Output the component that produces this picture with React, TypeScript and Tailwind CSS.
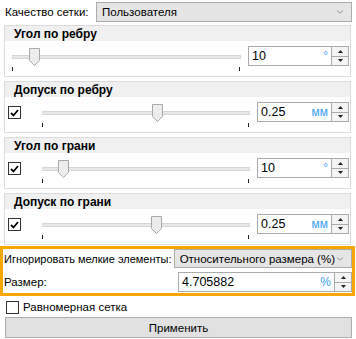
import { ChevronDown } from "lucide-react";

type Group = {
  title: string;
  checkbox: boolean;
  thumb: number;
  value: string;
  unit: string;
};

const groups: Group[] = [
  { title: "Угол по ребру", checkbox: false, thumb: 17, value: "10", unit: "°" },
  { title: "Допуск по ребру", checkbox: true, thumb: 110, value: "0.25", unit: "мм" },
  { title: "Угол по грани", checkbox: true, thumb: 16, value: "10", unit: "°" },
  { title: "Допуск по грани", checkbox: true, thumb: 109, value: "0.25", unit: "мм" },
];

function Check({ checked }: { checked: boolean }) {
  return (
    <div className="w-[13px] h-[13px] border border-[#333] bg-white flex items-center justify-center shrink-0">
      {checked && (
        <svg width="9" height="8" viewBox="0 0 9 8">
          <path d="M1 4 L3.5 6.5 L8 1" fill="none" stroke="#000" strokeWidth="1.8" />
        </svg>
      )}
    </div>
  );
}

function SpinBox({ value, unit, width }: { value: string; unit: string; width: string }) {
  return (
    <div className={`${width} h-[20px] border border-[#ababab] bg-white flex`}>
      <div className="flex-1 flex items-center pl-[3px] pr-[3px] text-[12.5px] text-black">
        <span className="flex-1">{value}</span>
        <span className="text-[#3c9ef0] text-[12px]">{unit}</span>
      </div>
      <div className="w-[17px] border-l border-[#ababab] flex flex-col">
        <div className="flex-1 bg-[#f4f4f4] border-b border-[#ababab] flex items-center justify-center">
          <svg width="5" height="3" viewBox="0 0 5 3"><path d="M0 3 L2.5 0 L5 3 Z" fill="#222" /></svg>
        </div>
        <div className="flex-1 bg-[#f4f4f4] flex items-center justify-center">
          <svg width="5" height="3" viewBox="0 0 5 3"><path d="M0 0 L2.5 3 L5 0 Z" fill="#222" /></svg>
        </div>
      </div>
    </div>
  );
}

function Slider({ thumb, width }: { thumb: number; width: string }) {
  return (
    <div className={`relative ${width} h-[26px]`}>
      <div className="absolute left-0 right-0 top-[5px] h-[4px] bg-[#e7e7e7] border border-[#d6d6d6]" />
      <svg className="absolute top-[-2px]" style={{ left: thumb }} width="11" height="18" viewBox="0 0 11 18">
        <path d="M0.5 0.5 H10.5 V12.5 L5.5 17.5 L0.5 12.5 Z" fill="#ececec" stroke="#a8a8a8" />
      </svg>
      <div className="absolute left-0 top-[17px] w-[1px] h-[4px] bg-[#222]" />
      <div className="absolute right-[1px] top-[17px] w-[1px] h-[4px] bg-[#222]" />
    </div>
  );
}

export default function App() {
  return (
    <div className="w-[356px] h-[339px] bg-white text-[11.5px] leading-[14px] text-black overflow-hidden whitespace-nowrap" style={{ fontFamily: '"Liberation Sans", Arial, sans-serif' }}>
      <div className="flex items-center pt-[2px] pr-[4px]">
        <span className="w-[96px] pl-[5px]">Качество сетки:</span>
        <div className="flex-1 h-[20px] border border-[#acacac] bg-[#e5e5e5] flex items-center pl-[5px] pr-[6px]">
          <span className="flex-1">Пользователя</span>
          <ChevronDown size={10} color="#777" />
        </div>
      </div>

      <div className="mt-[3px] pl-[4px] pr-[5px] flex flex-col gap-[4px]">
        {groups.map((g) => (
          <div key={g.title} className="border border-[#dcdcdc] h-[52px] flex flex-col">
            <div className="h-[19px] bg-[#f0f0f0] pl-[9px] flex items-center font-bold text-[12px]">{g.title}</div>
            <div className="flex-1 flex items-start pt-[5px] pr-[1px]">
              {g.checkbox ? (
                <div className="w-[37px] pl-[3px] pt-[4px]">
                  <Check checked />
                </div>
              ) : (
                <div className="w-[7px]" />
              )}
              <div className="flex-1 pt-[4px]">
                <Slider thumb={g.thumb} width={g.checkbox ? "w-[208px]" : "w-[229px]"} />
              </div>
              <SpinBox value={g.value} unit={g.unit} width={g.checkbox ? "w-[92px]" : "w-[101px]"} />
            </div>
          </div>
        ))}
      </div>

      <div className="mt-[1px] mr-[1px] border-[3px] border-[#f7a800] flex flex-col gap-[4px] pb-[1px]">
        <div className="flex items-center">
          <span className="w-[174px] pl-[1px] text-[11px]">Игнорировать мелкие элементы:</span>
          <div className="flex-1 h-[19px] border border-[#acacac] bg-[#e5e5e5] flex items-center pl-[5px] pr-[6px]">
            <span className="flex-1">Относительного размера (%)</span>
            <ChevronDown size={10} color="#777" />
          </div>
        </div>
        <div className="flex items-center">
          <span className="w-[175px] pl-[1px]">Размер:</span>
          <SpinBox value="4.705882" unit="%" width="flex-1" />
        </div>
      </div>

      <div className="flex items-center gap-[4px] pl-[6px] mt-[4px]">
        <div className="w-[13px] h-[13px] border border-[#333] bg-white" />
        <span>Равномерная сетка</span>
      </div>

      <div className="mt-[3px] ml-[5px] mr-[4px] h-[21px] border border-[#adadad] bg-[#e1e1e1] flex items-center justify-center">
        Применить
      </div>
    </div>
  );
}
